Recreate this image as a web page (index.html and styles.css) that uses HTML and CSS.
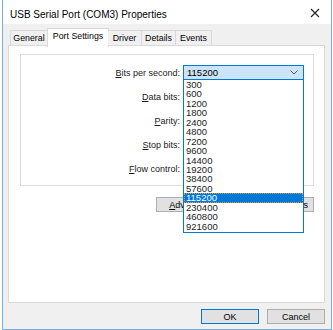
FILE: index.html
```html
<!DOCTYPE html>
<html lang="en">
<head>
    <meta charset="UTF-8">
    <title>USB Serial Port (COM3) Properties</title>
    <link rel="stylesheet" href="styles.css">
</head>
<body>
    <div class="window">
        <div class="titlebar">
            <span class="title">USB Serial Port (COM3) Properties</span>
            <svg class="close" width="10" height="10" viewBox="0 0 10 10">
                <path d="M1 1L9 9M9 1L1 9" stroke="#222" stroke-width="1.1" fill="none"/>
            </svg>
        </div>
        <div class="body">
            <div class="tabs">
                <span class="tab t-general">General</span>
                <span class="tab t-port active">Port Settings</span>
                <span class="tab t-driver">Driver</span>
                <span class="tab t-details">Details</span>
                <span class="tab t-events">Events</span>
            </div>
            <div class="panel">
                <div class="group">
                    <div class="row">
                        <span class="label"><u>B</u>its per second:</span>
                        <div class="combo open">
                            <span>115200</span>
                            <svg class="chev" width="8" height="5" viewBox="0 0 8 5">
                                <path d="M0.5 0.5L4 4L7.5 0.5" stroke="#555" stroke-width="1" fill="none"/>
                            </svg>
                            <ul class="droplist">
                                <li>300</li>
                                <li>600</li>
                                <li>1200</li>
                                <li>1800</li>
                                <li>2400</li>
                                <li>4800</li>
                                <li>7200</li>
                                <li>9600</li>
                                <li>14400</li>
                                <li>19200</li>
                                <li>38400</li>
                                <li>57600</li>
                                <li class="sel">115200</li>
                                <li>230400</li>
                                <li>460800</li>
                                <li>921600</li>
                            </ul>
                        </div>
                    </div>
                    <div class="row">
                        <span class="label"><u>D</u>ata bits:</span>
                        <div class="combo"></div>
                    </div>
                    <div class="row">
                        <span class="label"><u>P</u>arity:</span>
                        <div class="combo"></div>
                    </div>
                    <div class="row">
                        <span class="label"><u>S</u>top bits:</span>
                        <div class="combo"></div>
                    </div>
                    <div class="row">
                        <span class="label"><u>F</u>low control:</span>
                        <div class="combo"></div>
                    </div>
                </div>
                <div class="panel-buttons">
                    <button class="btn adv"><u>A</u>dvanced...</button>
                    <button class="btn restore"><u>R</u>estore Defaults</button>
                </div>
            </div>
            <div class="footer">
                <button class="btn ok">OK</button>
                <button class="btn">Cancel</button>
            </div>
        </div>
    </div>
</body>
</html>
```

FILE: styles.css
```css
*{
    margin: 0;
    padding: 0;
    box-sizing: border-box;
}
body{
    width: 333px;
    height: 330px;
    overflow: hidden;
    background-color: #fff;
    font-family: "Liberation Sans", Arial, sans-serif;
    font-size: 9px;
    color: #000;
}
.window{
    margin-left: 2px;
    width: 330px;
    height: 330px;
    border: 1px solid #78aee0;
    border-top: none;
    display: flex;
    flex-direction: column;
}
.titlebar{
    height: 24px;
    background-color: #fff;
    display: flex;
    align-items: center;
    justify-content: space-between;
    padding: 0 7px 0 7px;
}
.title{
    font-size: 10px;
    margin-top: 4px;
}
.close{
    margin-right: 4px;
    margin-top: 2px;
}
.body{
    flex: 1;
    background-color: #f0f0f0;
    padding: 4px 5px 0 5px;
}
.tabs{
    display: flex;
    height: 17px;
    padding-left: 2px;
    position: relative;
    z-index: 2;
}
.tab{
    height: 15px;
    margin-top: 2px;
    border: 1px solid #d9d9d9;
    border-bottom: none;
    border-left: none;
    line-height: 14px;
    text-align: center;
    background-color: #f0f0f0;
    font-size: 8.8px;
}
.tab:first-child{
    border-left: 1px solid #d9d9d9;
}
.t-general{ width: 38px; }
.t-driver{ width: 34px; }
.t-details{ width: 34px; }
.t-events{ width: 36px; }
.tab.active{
    width: 62px;
    height: 19px;
    margin-top: 0;
    margin-left: -1px;
    margin-right: -1px;
    border-left: 1px solid #d9d9d9;
    background-color: #fff;
    line-height: 15px;
}
.panel{
    height: 258px;
    width: 317px;
    background-color: #fff;
    border: 1px solid #d9d9d9;
    padding: 8px 10px 0 11px;
}
.group{
    border: 1px solid #dcdcdc;
    padding: 10px 0 9px 0;
    display: flex;
    flex-direction: column;
    gap: 9px;
}
.row{
    display: grid;
    grid-template-columns: 159px 121px;
    column-gap: 3px;
    align-items: center;
    height: 15px;
}
.label{
    text-align: right;
    color: #1a1a1a;
}
.combo{
    height: 15px;
    border: 1px solid #adadad;
    background-color: #fff;
    position: relative;
}
.combo.open{
    background-color: #cce4f7;
    border-color: #0078d7;
    display: flex;
    justify-content: space-between;
    align-items: center;
    padding: 0 5px 0 3px;
    font-size: 9.5px;
}
.droplist{
    list-style: none;
    position: absolute;
    top: 13px;
    left: -1px;
    width: 121px;
    border: 1px solid #0078d7;
    background-color: #fff;
    z-index: 5;
    padding-bottom: 1px;
}
.droplist li{
    height: 9.45px;
    line-height: 9.45px;
    padding-left: 2px;
    font-size: 9.5px;
    color: #222;
}
.droplist li.sel{
    background-color: #0078d7;
    color: #fff;
    outline: 1px dotted #e89a3c;
    outline-offset: -1px;
}
.panel-buttons{
    display: flex;
    justify-content: flex-end;
    gap: 5px;
    margin-top: 11px;
}
.btn{
    height: 15px;
    background-color: #e1e1e1;
    border: 1px solid #adadad;
    font-family: "Liberation Sans", Arial, sans-serif;
    font-size: 9px;
    color: #000;
}
.adv{
    width: 74px;
}
.restore{
    width: 79px;
}
.footer{
    display: flex;
    justify-content: flex-end;
    gap: 8px;
    padding: 6px 1px 0 0;
}
.footer .btn{
    width: 58px;
}
.footer .ok{
    border-color: #0078d7;
}
```
